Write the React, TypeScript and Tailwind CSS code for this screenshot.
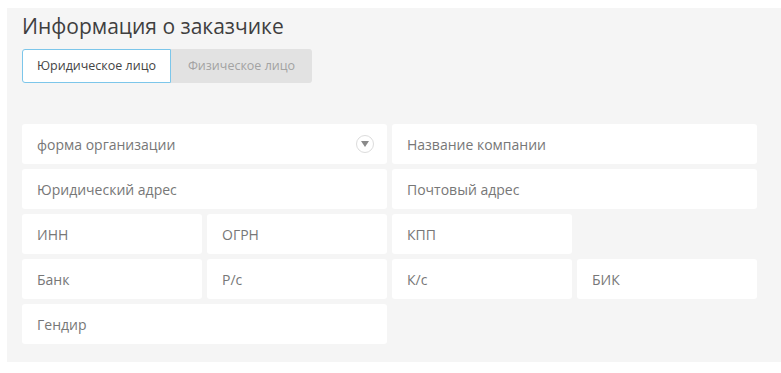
import React, { useState } from 'react';

const fields: { label: string; span: string; select?: boolean }[] = [
  { label: 'форма организации', span: 'col-span-2', select: true },
  { label: 'Название компании', span: 'col-span-2' },
  { label: 'Юридический адрес', span: 'col-span-2' },
  { label: 'Почтовый адрес', span: 'col-span-2' },
  { label: 'ИНН', span: 'col-span-1' },
  { label: 'ОГРН', span: 'col-span-1' },
  { label: 'КПП', span: 'col-span-1' },
  { label: '', span: 'col-span-1 invisible' },
  { label: 'Банк', span: 'col-span-1' },
  { label: 'Р/с', span: 'col-span-1' },
  { label: 'К/с', span: 'col-span-1' },
  { label: 'БИК', span: 'col-span-1' },
  { label: 'Гендир', span: 'col-span-2' },
];

export default function App() {
  const [tab, setTab] = useState<'legal' | 'person'>('legal');

  return (
    <div className="w-[781px] h-[373px] bg-white pt-2 pl-[7px] font-['Open_Sans',sans-serif]">
      <div className="bg-[#f5f5f5] h-[354px] pl-[15px] pt-[3px]">
        {/* Header */}
        <h2 className="text-[21px] leading-[30px] text-[#3f3f3f]">
          Информация о заказчике
        </h2>

        {/* Tabs */}
        <div className="flex mt-[8px] h-[34px] w-[290px]">
          <button
            onClick={() => setTab('legal')}
            className={
              tab === 'legal'
                ? 'w-[149px] bg-white border border-[#7cc6ea] rounded-l-[3px] text-[12.5px] text-[#444]'
                : 'w-[149px] bg-[#e2e2e2] rounded-l-[3px] text-[12.5px] text-[#a3a3a3]'
            }
          >
            Юридическое лицо
          </button>
          <button
            onClick={() => setTab('person')}
            className={
              tab === 'person'
                ? 'flex-1 bg-white border border-[#7cc6ea] rounded-r-[3px] text-[12.5px] text-[#444]'
                : 'flex-1 bg-[#e2e2e2] rounded-r-[3px] text-[12.5px] text-[#a3a3a3]'
            }
          >
            Физическое лицо
          </button>
        </div>

        {/* Fields */}
        <div className="grid grid-cols-[180px_180px_180px_180px] auto-rows-[40px] gap-[5px] mt-[41px]">
          {fields.map((f, i) => (
            <div
              key={i}
              className={`${f.span} bg-white rounded-[3px] flex items-center justify-between pl-[15px] pr-[13px] text-[14px] text-[#777]`}
            >
              <span>{f.label}</span>
              {f.select && (
                <span className="w-[18px] h-[18px] rounded-full border border-[#dcdcdc] flex items-center justify-center">
                  <svg width="8" height="6" viewBox="0 0 8 6">
                    <path d="M0 0 L8 0 L4 6 Z" fill="#8a8a8a" />
                  </svg>
                </span>
              )}
            </div>
          ))}
        </div>
      </div>
    </div>
  );
}
